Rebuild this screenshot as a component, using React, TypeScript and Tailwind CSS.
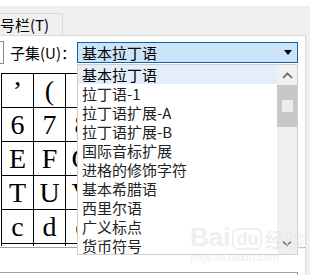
const GRID_ROWS = [
  ['’', '(', ')', '', '', '', ''],
  ['6', '7', '8', '', '', '', ''],
  ['E', 'F', 'G', '', '', '', ''],
  ['T', 'U', 'V', '', '', '', ''],
  ['c', 'd', 'e', '', '', '', ''],
];

const SUBSETS = [
  '基本拉丁语',
  '拉丁语-1',
  '拉丁语扩展-A',
  '拉丁语扩展-B',
  '国际音标扩展',
  '进格的修饰字符',
  '基本希腊语',
  '西里尔语',
  '广义标点',
  '货币符号',
];

function CharGrid() {
  return (
    <div className="mt-[9px] ml-[1px] flex flex-col font-['Liberation_Serif',serif] text-[28px] leading-none text-black">
      {GRID_ROWS.map((row, r) => (
        <div key={r} className="flex">
          {row.map((ch, c) => (
            <div
              key={c}
              className="flex h-[34px] w-[32px] shrink-0 items-center justify-center border-l border-t border-black"
            >
              {ch}
            </div>
          ))}
        </div>
      ))}
      {/* cut-off next row */}
      <div className="flex">
        {GRID_ROWS[0].map((_, c) => (
          <div key={c} className="h-[3px] w-[32px] shrink-0 border-l border-t border-black" />
        ))}
      </div>
    </div>
  );
}

function SubsetList() {
  return (
    <div className="absolute left-[77px] top-[28px] flex h-[191px] w-[221px] border border-[#cfcfcf] bg-white">
      <div className="flex flex-1 flex-col overflow-hidden">
        {SUBSETS.map((s, i) => (
          <div
            key={s}
            className={`flex h-[19px] shrink-0 items-center pl-[4px] text-[15px] leading-none text-[#222] ${
              i === 0 ? 'bg-[#e4eefb] text-black' : ''
            }`}
          >
            {s}
          </div>
        ))}
      </div>
      <div className="flex w-[20px] flex-col bg-[#f0f0f0]">
        <div className="flex h-[20px] items-center justify-center">
          <svg width="11" height="7" viewBox="0 0 11 7">
            <path d="M1 6 L5.5 1.5 L10 6" fill="none" stroke="#606060" strokeWidth="1.6" />
          </svg>
        </div>
        <div className="flex h-[42px] flex-col items-center bg-[#c8c8c8] pt-[15px]">
          <div className="h-[12px] w-[11px] bg-[#ececec]" />
        </div>
        <div className="flex-1" />
        <div className="flex h-[20px] items-center justify-center pb-[2px]">
          <svg width="10" height="7" viewBox="0 0 10 7">
            <path d="M1 1.5 L5 5.5 L9 1.5" fill="none" stroke="#606060" strokeWidth="1.6" />
          </svg>
        </div>
      </div>
    </div>
  );
}

function Watermark() {
  return (
    <div className="pointer-events-none absolute left-[190px] top-[188px] flex flex-col font-['Liberation_Sans',sans-serif] text-[#e6e6e6] opacity-60">
      <div className="flex items-end gap-[2px] text-[26px] font-bold leading-none">
        <span>Bai</span>
        <span className="rounded-[6px] border-2 border-[#e6e6e6] px-[2px] text-[18px]">du</span>
        <span className="font-['Noto_Sans_CJK_SC',sans-serif] text-[20px]">经验</span>
      </div>
      <div className="mt-[2px] text-[11px] leading-none">jingyan.baidu.com</div>
    </div>
  );
}

export default function App() {
  return (
    <div className="flex h-[275px] w-[310px] flex-col overflow-hidden bg-[#f0f0f0] font-['Noto_Sans_CJK_SC',sans-serif] text-black">
      <div className="h-[6px] shrink-0 bg-white" />
      <div className="flex h-[29px] shrink-0 items-end">
        <div className="flex h-[22px] w-[63px] items-center border-r border-t border-[#d9d9d9] text-[15px] leading-none">
          号栏(T)
        </div>
      </div>

      <div className="relative flex w-[306px] flex-1 flex-col overflow-hidden border-r border-t border-[#d9d9d9] bg-white">
        <div className="mt-[5px] flex h-[23px] shrink-0 items-center">
          <div className="h-[23px] w-[4px] border-y border-r border-[#8a8a8a]" />
          <div className="w-[73px] pl-[6px] text-[15px] leading-none">子集(U)：</div>
          <div className="flex h-[21px] w-[221px] items-center justify-between border border-[#155fa0] bg-[#cce4f7] pl-[4px] pr-[4px] text-[15px] leading-none">
            <span>基本拉丁语</span>
            <svg width="8" height="5" viewBox="0 0 8 5" className="mr-[1px]">
              <path d="M0 0 H8 L4 5 Z" fill="#000" />
            </svg>
          </div>
        </div>

        <CharGrid />

        <div className="mt-[1px] h-[25px] shrink-0 border-t border-[#a0a0a0]" />
        <div className="h-[10px] w-[298px] shrink-0 border-r border-t border-[#a0a0a0]" />

        <SubsetList />
        <Watermark />
      </div>
    </div>
  );
}
